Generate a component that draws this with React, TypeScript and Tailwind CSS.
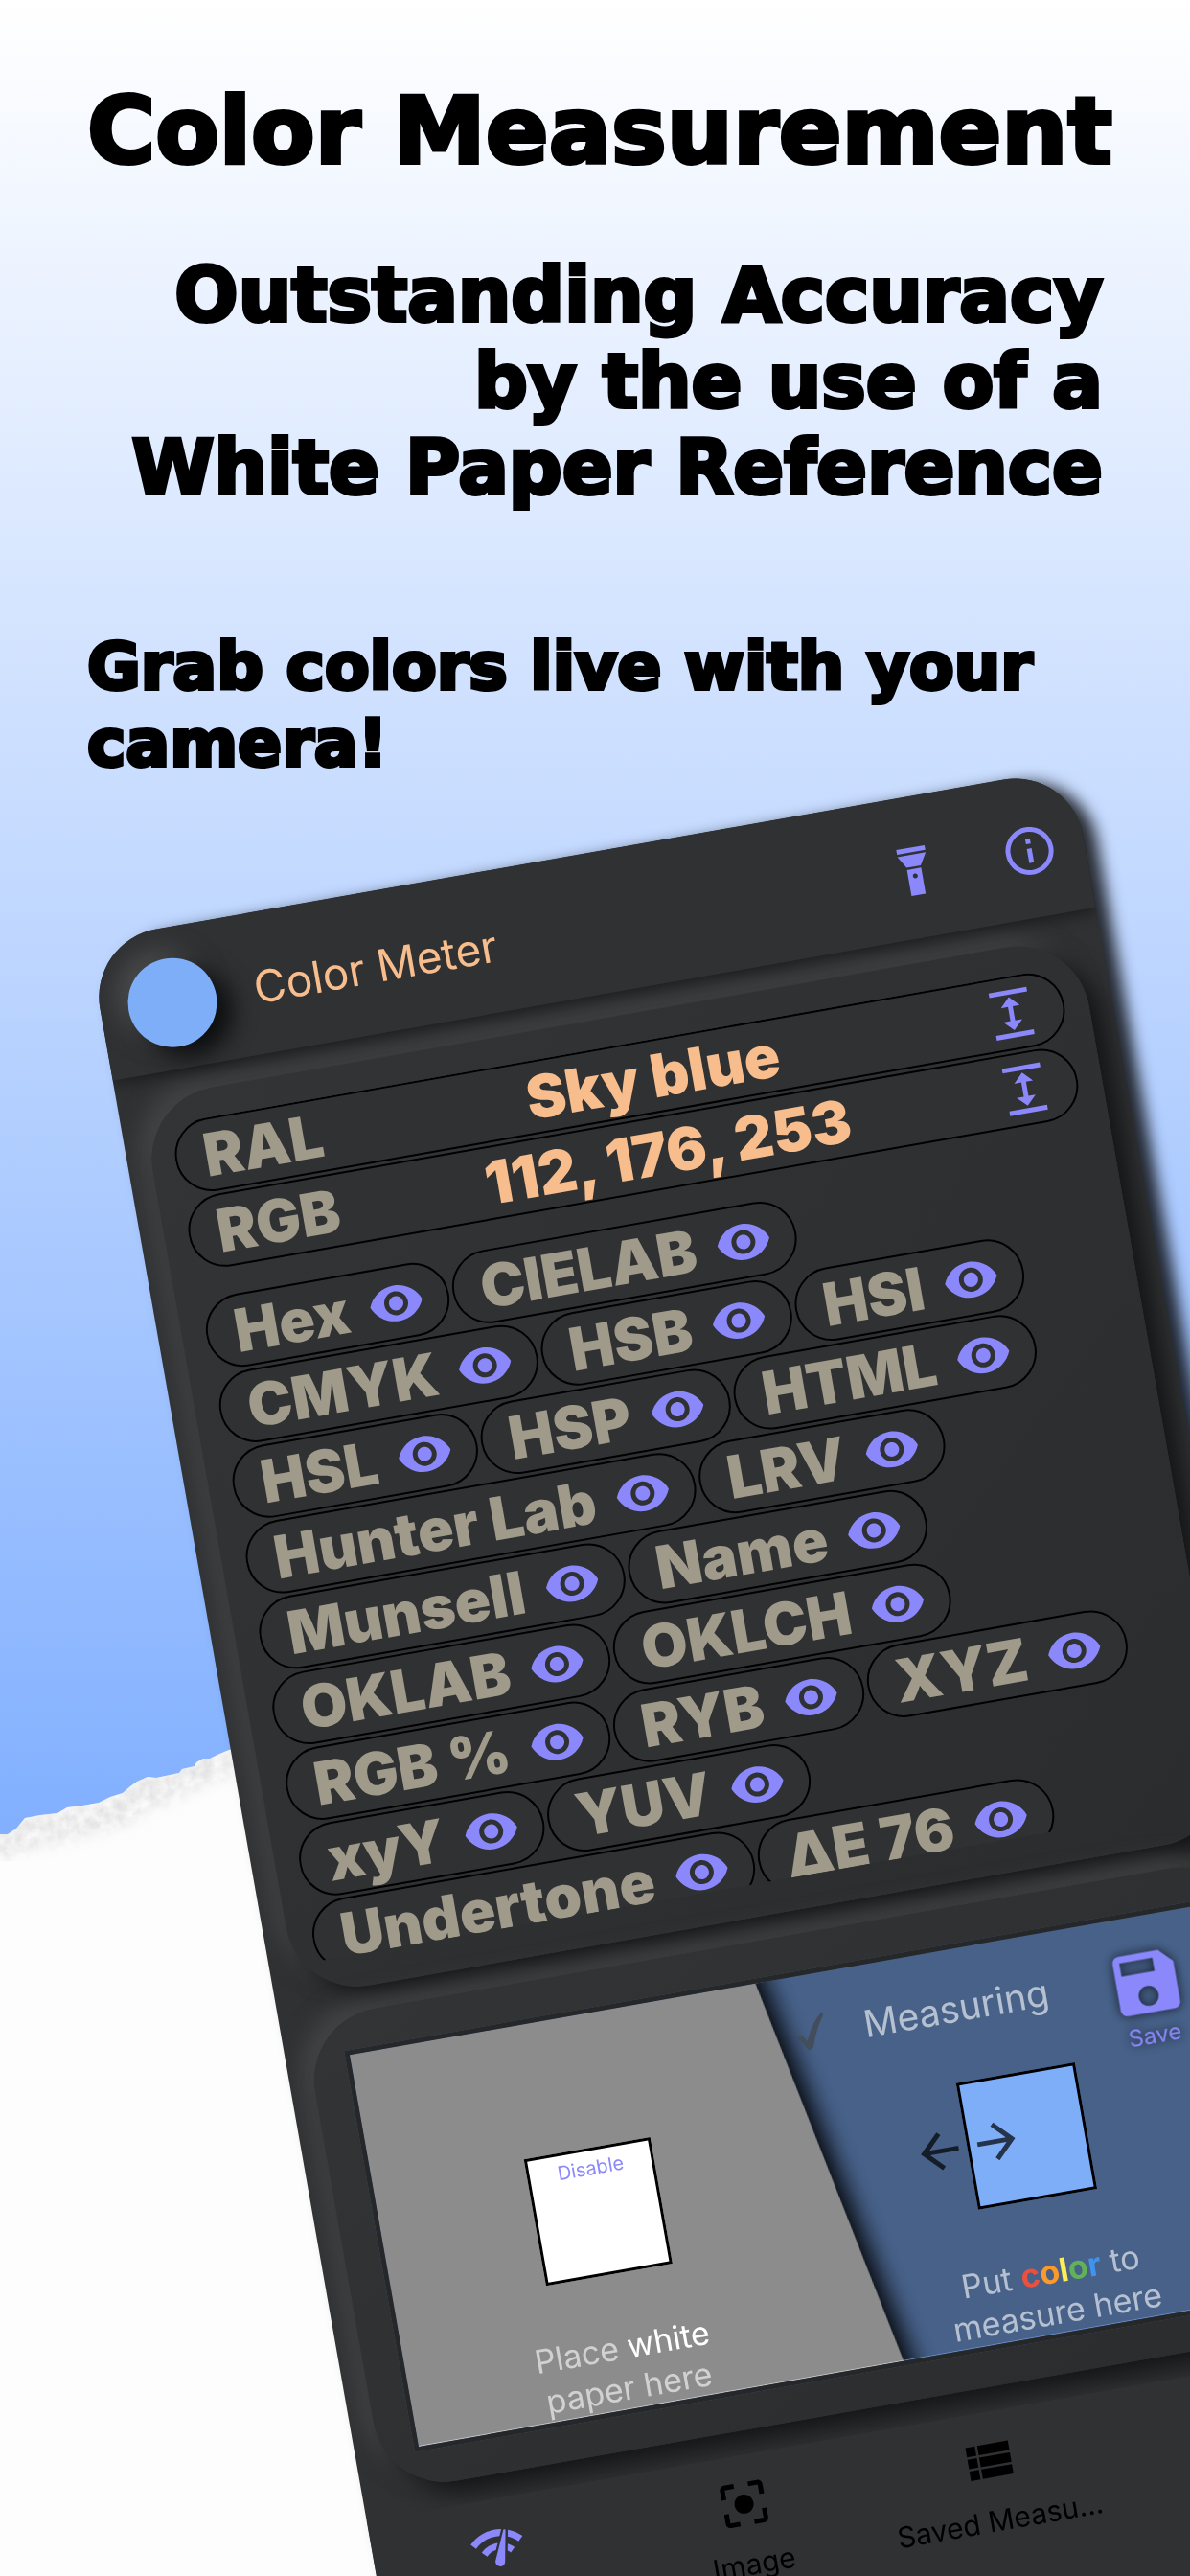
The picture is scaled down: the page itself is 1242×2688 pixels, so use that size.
import { FC } from 'react';
import type { IconType } from 'react-icons';
import {
  MdArrowBack,
  MdArrowForward,
  MdCenterFocusStrong,
  MdExpand,
  MdInfoOutline,
  MdNetworkCheck,
  MdSave,
  MdSettings,
  MdViewList,
  MdVisibility,
} from 'react-icons/md';

type ReadingType = {
  label: string;
  value: string;
};

type NavItemType = {
  label: string;
  icon: IconType;
  active?: boolean;
};

const readings: ReadingType[] = [
  { label: 'RAL', value: 'Sky blue' },
  { label: 'RGB', value: '112, 176, 253' },
];

const chipRows: string[][] = [
  ['Hex', 'CIELAB'],
  ['CMYK', 'HSB', 'HSI'],
  ['HSL', 'HSP', 'HTML'],
  ['Hunter Lab', 'LRV'],
  ['Munsell', 'Name'],
  ['OKLAB', 'OKLCH'],
  ['RGB %', 'RYB', 'XYZ'],
  ['xyY', 'YUV'],
  ['Undertone', 'ΔE 76'],
];

const navItems: NavItemType[] = [
  { label: 'Live', icon: MdNetworkCheck, active: true },
  { label: 'Image', icon: MdCenterFocusStrong },
  { label: 'Saved Measu...', icon: MdViewList },
  { label: 'Settings', icon: MdSettings },
];

const TornPaper: FC = () => (
  <svg className="absolute bottom-0 left-0" width="560" height="930" viewBox="0 1758 560 930" aria-hidden="true">
    <defs>
      <filter id="fibre" x="0" y="0" width="1" height="1">
        <feTurbulence type="fractalNoise" baseFrequency="0.09" numOctaves="5" seed="4" />
        <feColorMatrix values="0 0 0 0 0.76  0 0 0 0 0.76  0 0 0 0 0.76  1.6 0 0 0 -0.2" />
      </filter>
      <filter id="soft">
        <feGaussianBlur stdDeviation="8" />
      </filter>
      <clipPath id="sheet">
        <path d="M0 1914L8 1914L17 1908L26 1897L42 1894L60 1892L70 1886L86 1884L103 1881L115 1875L128 1871L136 1864L143 1859L154 1854L163 1855L187 1850L190 1846L203 1843L205 1839L212 1835L219 1835L227 1831L239 1826L420 1770L560 1770V2688H0Z" />
      </clipPath>
      <mask id="edge">
        <path
          d="M-20 1932L30 1912L75 1902L118 1890L158 1868L200 1850L240 1832"
          fill="none"
          stroke="#fff"
          strokeWidth="34"
          filter="url(#soft)"
        />
      </mask>
    </defs>
    <g clipPath="url(#sheet)">
      <rect y="1758" width="560" height="930" fill="#fdfdfd" />
      <g mask="url(#edge)">
        <rect y="1758" width="560" height="260" filter="url(#fibre)" />
      </g>
    </g>
  </svg>
);

const Flashlight: FC = () => (
  <svg viewBox="0 0 24 24" className="size-[60px]" fill="currentColor" aria-hidden="true">
    <path d="M9 10 6 5h12l-3 5H9Zm9-6H6V2h12v2ZM9 22V11h6v11H9Zm3-9a1 1 0 1 0 0 2 1 1 0 0 0 0-2Z" />
  </svg>
);

const Reading: FC<ReadingType> = ({ label, value }) => (
  <div className="flex h-[77px] items-center rounded-full border-2 border-black bg-[#303133] pl-7 pr-6 text-[62px] font-black leading-none">
    <span className="text-[#a09a8b]">{label}</span>
    <span className="flex-1 text-center text-[#f8bd8c]">{value}</span>
    <button type="button" aria-label={`Expand ${label}`} className="text-[#8a88fb]">
      <MdExpand className="size-[60px]" />
    </button>
  </div>
);

const Chip: FC<{ label: string }> = ({ label }) => (
  <button
    type="button"
    className="flex h-[77px] shrink-0 items-center gap-5 whitespace-nowrap rounded-full border-2 border-black bg-[#303133] pl-7 pr-6 text-[62px] font-black leading-none text-[#a09a8b]"
  >
    {label}
    <MdVisibility className="size-[60px] text-[#8a88fb]" />
  </button>
);

const Camera: FC = () => (
  <div className="relative grid h-[425px] grid-cols-2 overflow-hidden border-[5px] border-[#262728] bg-[#476189] text-center text-[34px] leading-[43px]">
    <svg className="absolute inset-0 size-full" viewBox="0 0 908 415" preserveAspectRatio="none" aria-hidden="true">
      <path
        d="M-60 -60H418L430 0L514 415L526 475H-60Z"
        fill="#8c8c8c"
        className="drop-shadow-[10px_2px_12px_rgba(0,0,0,0.95)]"
      />
      <path d="M0 414.500H514" stroke="#c4c4c4" />
      <path d="M514 414.500H908" stroke="#6b8cc4" />
    </svg>
    <div className="relative flex flex-col items-center pt-[139px] text-white/60">
      <button
        type="button"
        className="flex size-[134px] justify-center border-[3px] border-black bg-white pt-1 text-xl text-[#8a88fb]"
      >
        Disable
      </button>
      <p className="mt-[55px]">
        Place <span className="text-white">white</span>
        <br />
        paper here
      </p>
    </div>
    <div className="relative flex flex-col items-center text-white/60">
      <div className="flex h-[139px] w-full items-start pl-2 pt-7">
        <svg viewBox="0 0 32 40" className="mt-3 h-10 w-8" aria-hidden="true">
          <path d="M1 22C4 20 7 22 11 29C15 20 20 10 30 2C32 1 33 3 31 6C24 16 20 25 16 36C14 39 10 39 9 36C7 31 4 27 1 25Z" fill="#434d5b" />
        </svg>
        <p className="ml-10 mt-3 text-[39px]">Measuring</p>
        <button
          type="button"
          className="ml-[60px] flex flex-col items-center text-2xl leading-7 text-[#8a88fb] drop-shadow-[0_0_6px_rgba(0,0,0,0.7)]"
        >
          <MdSave className="size-[84px]" />
          Save
        </button>
      </div>
      <div className="relative h-[134px] w-[126px] border-[3px] border-black bg-[#7eaef8]">
        <div className="absolute -left-[62px] top-[34px] flex text-black/70">
          <MdArrowBack className="size-[60px]" />
          <MdArrowForward className="size-[60px]" />
        </div>
      </div>
      <p className="mt-[55px]">
        Put{' '}
        <span className="font-bold">
          <span className="text-[#e8503f]">c</span>
          <span className="text-[#f99a2b]">o</span>
          <span className="text-[#fdee55]">l</span>
          <span className="text-[#62b158]">o</span>
          <span className="text-[#3f94f0]">r</span>
        </span>{' '}
        to
        <br />
        measure here
      </p>
    </div>
  </div>
);

const Phone: FC = () => (
  <section className="origin-top-left -rotate-10 overflow-clip rounded-[72px] bg-[#303133] font-[Inter,'Liberation_Sans',sans-serif]">
    <header className="relative z-10 flex h-[148px] items-center bg-[#303133] pl-[29px] pr-7 pt-2 shadow-[0_4px_16px_rgba(0,0,0,0.45)]">
      <div className="size-[93px] rounded-full bg-[#7eaef8] shadow-[14px_12px_24px_#0c0d0e,-10px_-10px_24px_#4b4c4c]" />
      <h2 className="ml-10 flex-1 text-[46px] text-[#f8bd8c]">Color Meter</h2>
      <div className="flex gap-[62px] text-[#8a88fb]">
        <button type="button" aria-label="Flashlight">
          <Flashlight />
        </button>
        <button type="button" aria-label="Information">
          <MdInfoOutline className="size-[60px]" />
        </button>
      </div>
    </header>
    <main className="flex flex-col gap-[25px] p-[25px]">
      <div className="rounded-[75px] bg-linear-to-br from-[#333436] to-[#2b2c2e] px-[25px] pb-[34px] pt-[30px] shadow-[12px_12px_24px_#131415,-10px_-10px_24px_#474848]">
        <div className="h-[887px] overflow-hidden">
          <div className="flex flex-col gap-[3px]">
            {readings.map((reading) => (
              <Reading key={reading.label} {...reading} />
            ))}
          </div>
          <div className="mt-[29px] flex flex-col gap-[3px]">
            {chipRows.map((row) => (
              <div key={row[0]} className="flex gap-1">
                {row.map((label) => (
                  <Chip key={label} label={label} />
                ))}
              </div>
            ))}
          </div>
        </div>
      </div>
      <div className="rounded-[75px] bg-linear-to-br from-[#333436] to-[#2b2c2e] px-[37px] pb-[37px] pt-[38px] shadow-[12px_12px_24px_#131415,-10px_-10px_24px_#474848]">
        <Camera />
      </div>
    </main>
    <nav className="relative grid h-[260px] grid-cols-4 bg-[#303133] pt-[21px]">
      {navItems.map(({ label, icon: Icon, active }) => (
        <a
          key={label}
          href={`#${label}`}
          className={`flex flex-col items-center gap-[13px] text-[30px] leading-10 ${active ? 'text-[#8a88fb]' : 'text-black'}`}
        >
          <Icon className="size-[60px]" />
          {label}
        </a>
      ))}
    </nav>
  </section>
);

const App: FC = () => (
  <div className="relative h-screen overflow-hidden bg-[linear-gradient(#ffffff,#82b0ff_1900px)] text-black">
    <TornPaper />
    <div className="relative flex h-[982px] flex-col px-[91px] pt-[77px] font-['DejaVu_Sans','Liberation_Sans',sans-serif] font-bold [-webkit-text-stroke:4px_black]">
      <h1 className="whitespace-nowrap text-[97px] leading-[120px]">Color Measurement</h1>
      <p className="mt-[66px] whitespace-nowrap text-right text-[78px] leading-[90px]">
        Outstanding Accuracy
        <br />
        by the use of a
        <br />
        White Paper Reference
      </p>
      <p className="mt-[123px] whitespace-nowrap text-[68px] leading-[80px]">
        Grab colors live with your
        <br />
        camera!
      </p>
    </div>
    <div className="relative pl-[92px] pr-[108px]">
      <div className="drop-shadow-[14px_4px_8px_rgba(0,0,0,0.8)]">
        <Phone />
      </div>
    </div>
  </div>
);

export default App;
